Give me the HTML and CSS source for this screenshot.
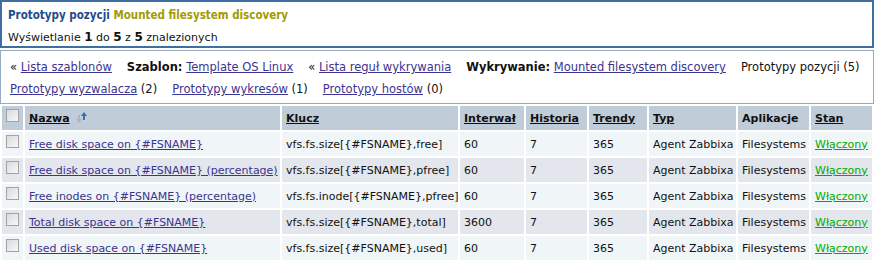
FILE: index.html
```html
<!DOCTYPE html>
<html lang="pl">
<head>
  <meta charset="UTF-8">
  <title>Prototypy pozycji</title>
  <link rel="stylesheet" href="styles.css">
</head>
<body>

  <div class="header-box">
    <h1>Prototypy pozycji <span class="discovery-name">Mounted filesystem discovery</span></h1>
    <p class="found">Wyświetlanie <b>1</b> do <b>5</b> z <b>5</b> znalezionych</p>
  </div>

  <div class="nav-box">
    <div class="nav-line">
      <span class="nav-item">« <a href="#">Lista szablonów</a></span>
      <span class="nav-item"><b>Szablon:</b> <a href="#">Template OS Linux</a></span>
      <span class="nav-item">« <a href="#">Lista reguł wykrywania</a></span>
      <span class="nav-item"><b>Wykrywanie:</b> <a href="#">Mounted filesystem discovery</a></span>
      <span class="nav-item">Prototypy pozycji (5)</span>
    </div>
    <div class="nav-line">
      <span class="nav-item"><a href="#">Prototypy wyzwalacza</a> (2)</span>
      <span class="nav-item"><a href="#">Prototypy wykresów</a> (1)</span>
      <span class="nav-item"><a href="#">Prototypy hostów</a> (0)</span>
    </div>
  </div>

  <table class="items">
    <thead>
      <tr>
        <th class="col-check"><span class="checkbox"></span></th>
        <th class="col-name"><a href="#">Nazwa</a>
          <svg class="sort-icon" width="14" height="12" viewBox="0 0 14 12">
            <path d="M3 3h2v4h2l-3 4-3-4h2z" fill="#b0b4b8"/>
            <path d="M9 0l3 4h-2v4h-2v-4h-2z" fill="#3a6fb0"/>
          </svg>
        </th>
        <th class="col-key"><a href="#">Klucz</a></th>
        <th class="col-int"><a href="#">Interwał</a></th>
        <th class="col-hist"><a href="#">Historia</a></th>
        <th class="col-trend"><a href="#">Trendy</a></th>
        <th class="col-type"><a href="#">Typ</a></th>
        <th class="col-app">Aplikacje</th>
        <th class="col-state"><a href="#">Stan</a></th>
      </tr>
    </thead>
    <tbody>
      <tr>
        <td><span class="checkbox"></span></td>
        <td><a href="#">Free disk space on {#FSNAME}</a></td>
        <td>vfs.fs.size[{#FSNAME},free]</td>
        <td>60</td>
        <td>7</td>
        <td>365</td>
        <td>Agent Zabbixa</td>
        <td>Filesystems</td>
        <td><a href="#" class="enabled">Włączony</a></td>
      </tr>
      <tr>
        <td><span class="checkbox"></span></td>
        <td><a href="#">Free disk space on {#FSNAME} (percentage)</a></td>
        <td>vfs.fs.size[{#FSNAME},pfree]</td>
        <td>60</td>
        <td>7</td>
        <td>365</td>
        <td>Agent Zabbixa</td>
        <td>Filesystems</td>
        <td><a href="#" class="enabled">Włączony</a></td>
      </tr>
      <tr>
        <td><span class="checkbox"></span></td>
        <td><a href="#">Free inodes on {#FSNAME} (percentage)</a></td>
        <td>vfs.fs.inode[{#FSNAME},pfree]</td>
        <td>60</td>
        <td>7</td>
        <td>365</td>
        <td>Agent Zabbixa</td>
        <td>Filesystems</td>
        <td><a href="#" class="enabled">Włączony</a></td>
      </tr>
      <tr>
        <td><span class="checkbox"></span></td>
        <td><a href="#">Total disk space on {#FSNAME}</a></td>
        <td>vfs.fs.size[{#FSNAME},total]</td>
        <td>3600</td>
        <td>7</td>
        <td>365</td>
        <td>Agent Zabbixa</td>
        <td>Filesystems</td>
        <td><a href="#" class="enabled">Włączony</a></td>
      </tr>
      <tr>
        <td><span class="checkbox"></span></td>
        <td><a href="#">Used disk space on {#FSNAME}</a></td>
        <td>vfs.fs.size[{#FSNAME},used]</td>
        <td>60</td>
        <td>7</td>
        <td>365</td>
        <td>Agent Zabbixa</td>
        <td>Filesystems</td>
        <td><a href="#" class="enabled">Włączony</a></td>
      </tr>
    </tbody>
  </table>

</body>
</html>
```

FILE: styles.css
```css
/* General */
body {
  margin: 0;
  font-family: "DejaVu Sans", Verdana, sans-serif;
  font-size: 11px;
  color: #111;
  background-color: #fff;
}

a {
  color: #3b3490;
}

/* Title box */
.header-box {
  border: 2px solid #3e6f9e;
  padding: 6px 6px 3px 6px;
  height: 35px;
}

.header-box h1 {
  margin: 0;
  font-family: "DejaVu Sans Condensed", "DejaVu Sans", sans-serif;
  font-size: 11.5px;
  font-weight: bold;
  color: #1f4a8c;
}

.discovery-name {
  color: #a19b00;
}

.found {
  margin: 8px 0 0 0;
  font-size: 11px;
}

.found b {
  font-size: 12px;
}

/* Navigation box */
.nav-box {
  margin-top: 2px;
  border: 1px solid #98a9c4;
  padding: 5px 9px 5px 9px;
  height: 42px;
  font-size: 11.5px;
}

.nav-line {
  display: flex;
  gap: 15px;
  height: 22px;
  align-items: center;
}

/* Items table */
.items {
  border-collapse: separate;
  border-spacing: 2px;
  width: 100%;
  table-layout: fixed;
}

.items th,
.items td {
  text-align: left;
  padding: 0 2px 0 4px;
  height: 24px;
  white-space: nowrap;
}

.items th {
  background-color: #c0ccd7;
  font-weight: bold;
}

.items th a {
  color: #111;
}

.items tbody tr:nth-child(odd) td {
  background-color: #f0f5f8;
}

.items tbody tr:nth-child(even) td {
  background-color: #e3e7ed;
}

.col-check { width: 15px; }
.col-name { width: 249px; }
.col-key { width: 170px; }
.col-int { width: 58px; }
.col-hist { width: 55px; }
.col-trend { width: 52px; }
.col-type { width: 81px; }
.col-app { width: 65px; }

.sort-icon {
  vertical-align: top;
  margin-left: 2px;
}

.checkbox {
  display: inline-block;
  width: 11px;
  height: 11px;
  border: 1px solid #a0a4a8;
  background: linear-gradient(135deg, #d8dadc, #f8f8f8);
  vertical-align: middle;
  margin-top: -6px;
}

.enabled {
  color: #00aa00;
}
```
